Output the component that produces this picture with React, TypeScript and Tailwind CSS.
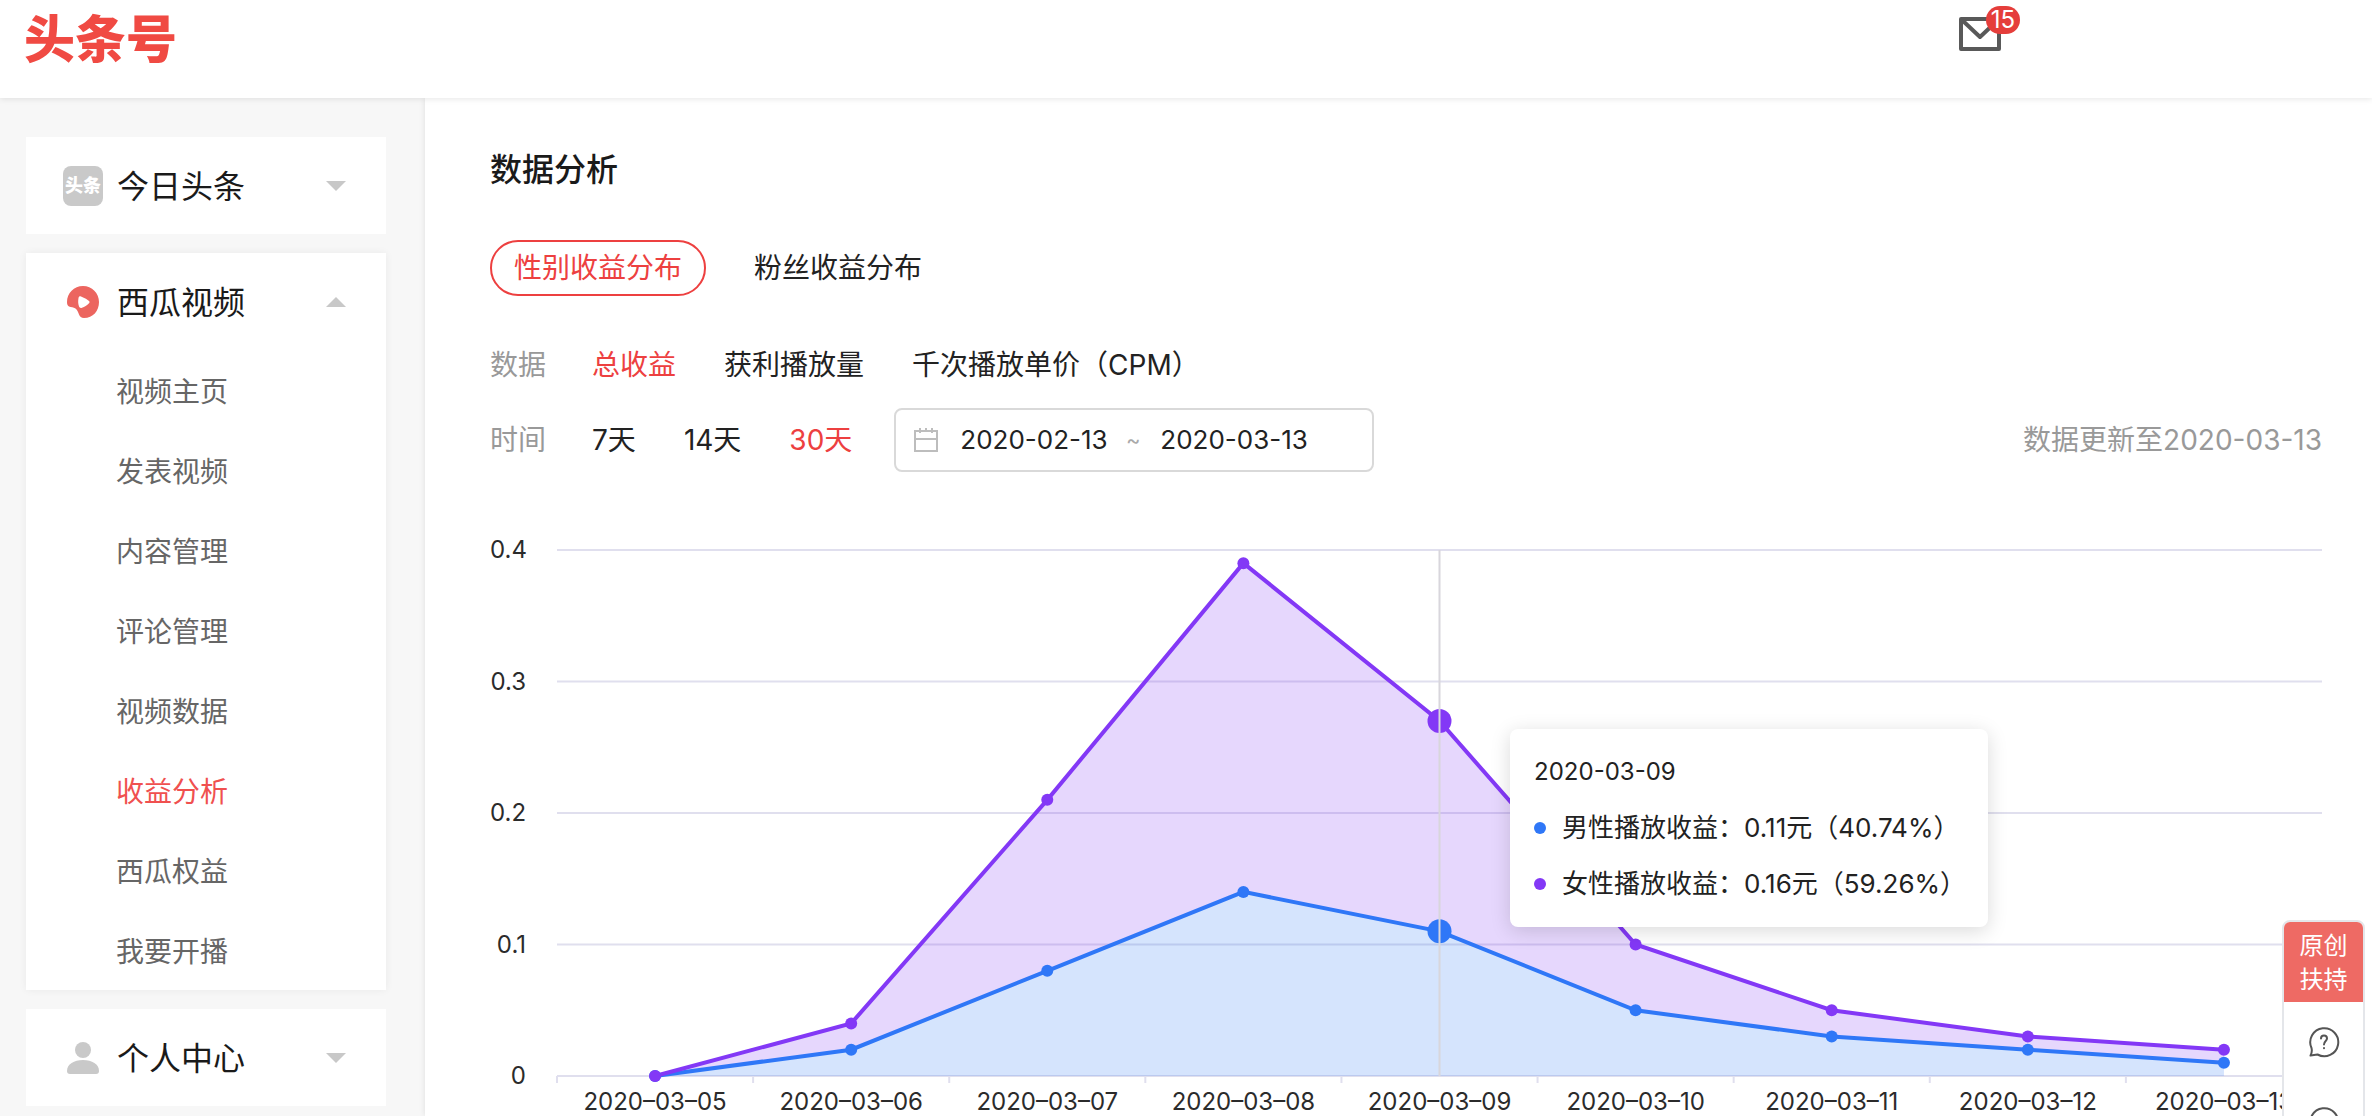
import { useState } from 'react';
import clsx from 'clsx';

const MENU = ['视频主页', '发表视频', '内容管理', '评论管理', '视频数据', '收益分析', '西瓜权益', '我要开播'];

const DATES = [
  '2020–03–05',
  '2020–03–06',
  '2020–03–07',
  '2020–03–08',
  '2020–03–09',
  '2020–03–10',
  '2020–03–11',
  '2020–03–12',
  '2020–03–13',
];
const MALE = [0, 0.02, 0.08, 0.14, 0.11, 0.05, 0.03, 0.02, 0.01];
const TOTAL = [0, 0.04, 0.21, 0.39, 0.27, 0.1, 0.05, 0.03, 0.02];
const Y_LABELS = ['0.4', '0.3', '0.2', '0.1', '0'];
const ACTIVE = 4;

const PLOT_H = 526;
const MAX = 0.4;

const xPct = (i: number) => ((i + 0.5) / DATES.length) * 100;
const yPx = (v: number) => PLOT_H - (v / MAX) * PLOT_H;
const toPoints = (values: number[]) => values.map((v, i) => `${xPct(i)},${yPx(v)}`);

function Arrow({ up = false }: { up?: boolean }) {
  return (
    <svg className="w-5 h-[10px] shrink-0" viewBox="0 0 20 10" fill="#c8c8c8">
      <path d={up ? 'M0 10L10 0L20 10Z' : 'M0 0H20L10 10Z'} />
    </svg>
  );
}

function XiguaIcon() {
  return (
    <svg className="w-8 h-8" viewBox="0 0 32 32">
      <path
        fill="#ec655f"
        d="M16 0C25 0 32 7 32 16C32 25 26 32 17 32C14 32 13 30.500 12 28.500C11 26 10.500 24 8.500 22.500C6.500 21 4 21.500 2 20.500C.5 19.500 0 18 0 16C0 7 7 0 16 0Z"
      />
      <path fill="#fff" d="M14 10.500C18 12 20.500 13.500 22 15C22.700 15.700 22.700 16.500 22 17.200C20 19.200 17.500 20.700 15 21.700C13.500 22.200 12.500 21.700 12 20.500C11 17.500 11 15 11.500 12C11.800 10.500 12.700 10 14 10.500Z" />
    </svg>
  );
}

function UserIcon() {
  return (
    <svg className="w-8 h-8" viewBox="0 0 32 32" fill="#c9c9c9">
      <circle cx="16" cy="8" r="8" />
      <path d="M0 29C0 22 7 18 16 18S32 22 32 29Q32 32 29 32H3Q0 32 0 29Z" />
    </svg>
  );
}

function CalendarIcon() {
  return (
    <svg className="w-6 h-6 shrink-0" viewBox="0 0 24 24" fill="none" stroke="#bdbdbd" strokeWidth={2}>
      <path d="M1 3H23V23H1ZM1 11H23M6 0V5M12 0V4M18 0V5" />
    </svg>
  );
}

function MailIcon() {
  return (
    <svg className="w-[42px] h-[34px]" viewBox="0 0 42 34" fill="none" stroke="#595959" strokeWidth={4} strokeLinejoin="round">
      <path d="M2 2H40V32H2ZM3 3L21 20L39 3" />
    </svg>
  );
}

function BubbleIcon({ children }: { children?: React.ReactNode }) {
  return (
    <svg className="w-8 h-8" viewBox="0 0 32 32" fill="none" stroke="#555" strokeWidth={2} strokeLinecap="round" strokeLinejoin="round">
      <path d="M3.500 22A14 14 0 1 1 9.500 28.500L2.500 29.500Q4.500 26 3.500 22Z" />
      {children}
    </svg>
  );
}

function CardHead({ icon, title, open = false }: { icon: React.ReactNode; title: string; open?: boolean }) {
  return (
    <button aria-expanded={open} className="w-full h-[97px] pl-[37px] pr-10 flex items-center text-left">
      <span className="w-10 flex justify-center mr-[14px]">{icon}</span>
      <span className="flex-1 pt-[3px] text-[32px] leading-[48px] text-[#1a1a1a]">{title}</span>
      <Arrow up={open} />
    </button>
  );
}

function Sidebar() {
  return (
    <aside className="w-[425px] shrink-0 bg-[#f7f7f7] pl-[26px] pr-[39px] pt-[39px] flex flex-col gap-[19px]">
      <section className="bg-white">
        <CardHead
          icon={
            <span className="w-10 h-10 rounded-lg bg-[#c9c9c9] text-white text-[18px] leading-[40px] font-black text-center whitespace-nowrap">
              头条
            </span>
          }
          title="今日头条"
        />
      </section>
      <section className="bg-white shadow-[0_0_8px_rgba(0,0,0,0.06)]">
        <CardHead icon={<XiguaIcon />} title="西瓜视频" open />
        <nav className="flex flex-col">
          {MENU.map((item) => (
            <a
              key={item}
              href="#"
              className={clsx('h-20 pl-[90px] text-[28px] leading-[84px]', item === '收益分析' ? 'text-[#f0504f]' : 'text-[#666]')}
            >
              {item}
            </a>
          ))}
        </nav>
      </section>
      <section className="bg-white">
        <CardHead icon={<UserIcon />} title="个人中心" />
      </section>
    </aside>
  );
}

interface OptionRowProps {
  label: string;
  options: string[];
  value: string;
  onChange: (v: string) => void;
}

function OptionRow({ label, options, value, onChange }: OptionRowProps) {
  return (
    <div className="flex items-center">
      <span className="text-[#999] mr-[46px]">{label}</span>
      <div className="flex gap-12">
        {options.map((o) => (
          <button key={o} onClick={() => onChange(o)} className={o === value ? 'text-[#ed4040]' : 'text-[#222]'}>
            {o}
          </button>
        ))}
      </div>
    </div>
  );
}

function Tooltip() {
  const rows = [
    { dot: 'bg-[#2f77f7]', text: '男性播放收益：0.11元（40.74%）' },
    { dot: 'bg-[#8338f6]', text: '女性播放收益：0.16元（59.26%）' },
  ];
  return (
    <div className="absolute left-[54%] top-[191px] w-[478px] h-[198px] px-6 py-[15px] bg-white rounded-lg shadow-[0_4px_20px_rgba(0,0,0,0.15)] text-[26px] leading-[56px] text-[#222] whitespace-nowrap">
      <p className="text-[24px] leading-[56px]">2020-03-09</p>
      {rows.map((r) => (
        <p key={r.text} className="flex items-center">
          <i className={clsx('w-3 h-3 shrink-0 rounded-full mr-4', r.dot)} />
          <span>{r.text}</span>
        </p>
      ))}
    </div>
  );
}

function Dots({ values, color }: { values: number[]; color: string }) {
  return (
    <>
      {values.map((v, i) => (
        <circle key={i} cx={`${xPct(i)}%`} cy={yPx(v)} r={i === ACTIVE ? 12 : 6} fill={color} />
      ))}
    </>
  );
}

function Chart() {
  const male = toPoints(MALE);
  const total = toPoints(TOTAL);
  const base = [`${xPct(DATES.length - 1)},${PLOT_H}`, `${xPct(0)},${PLOT_H}`];

  return (
    <div className="flex mt-[66px] text-[#2b2b2b]">
      <div className="w-9 mr-[31px] h-[550px] flex flex-col justify-between text-2xl leading-6 text-right">
        {Y_LABELS.map((l) => (
          <span key={l}>{l}</span>
        ))}
      </div>
      <div className="flex-1 relative pt-3">
        <svg className="block w-full h-[526px] overflow-visible">
          {Y_LABELS.map((l, i) => (
            <line key={l} x1="0" x2="100%" y1={(i * PLOT_H) / 4} y2={(i * PLOT_H) / 4} stroke="#e0dfee" strokeWidth={2} />
          ))}
          {DATES.map((d, i) => (
            <line
              key={d}
              x1={`${(i / DATES.length) * 100}%`}
              x2={`${(i / DATES.length) * 100}%`}
              y1={PLOT_H}
              y2={PLOT_H + 7}
              stroke="#e0dfee"
              strokeWidth={2}
            />
          ))}
          <svg width="100%" height={PLOT_H} viewBox={`0 0 100 ${PLOT_H}`} preserveAspectRatio="none" className="overflow-visible">
            <polygon points={[...male, ...base].join(' ')} fill="#2f77f7" fillOpacity={0.2} />
            <polygon points={[...total, ...[...male].reverse()].join(' ')} fill="#8338f6" fillOpacity={0.2} />
            <polyline points={male.join(' ')} fill="none" stroke="#2f77f7" strokeWidth={4} vectorEffect="non-scaling-stroke" />
            <polyline points={total.join(' ')} fill="none" stroke="#8338f6" strokeWidth={4} vectorEffect="non-scaling-stroke" />
          </svg>
          <Dots values={MALE} color="#2f77f7" />
          <Dots values={TOTAL} color="#8338f6" />
          <line x1={`${xPct(ACTIVE)}%`} x2={`${xPct(ACTIVE)}%`} y1="0" y2={PLOT_H} stroke="#d8d6dc" strokeWidth={2} />
        </svg>
        <div className="grid grid-cols-9 mt-3 text-2xl leading-[27px] text-center whitespace-nowrap">
          {DATES.map((d) => (
            <span key={d}>{d}</span>
          ))}
        </div>
        <Tooltip />
      </div>
    </div>
  );
}

function FloatBar() {
  return (
    <div className="fixed right-[7px] top-[920px] w-[83px] border-2 border-[#e4e6ea] rounded-lg bg-white overflow-hidden">
      <a href="#" className="flex flex-col items-center justify-center h-20 pt-0.5 bg-[#ee6a64] text-white text-2xl leading-[34px]">
        <span>原创</span>
        <span>扶持</span>
      </a>
      <button aria-label="帮助" className="w-full h-20 flex items-center justify-center">
        <BubbleIcon>
          <path d="M13 12.500C13 8.500 19 8.500 19 12.500C19 15 16 15 16 18.500M16 22V22.200" />
        </BubbleIcon>
      </button>
      <button aria-label="反馈" className="w-full h-20 flex items-center justify-center">
        <BubbleIcon />
      </button>
    </div>
  );
}

function App() {
  const [tab, setTab] = useState('性别收益分布');
  const [metric, setMetric] = useState('总收益');
  const [range, setRange] = useState('30天');

  return (
    <div className="h-screen flex flex-col overflow-hidden bg-white font-['Inter','Noto_Sans_CJK_SC',sans-serif]">
      <header className="relative z-10 h-[98px] shrink-0 pl-6 pr-[371px] flex items-start justify-between bg-white shadow-[0_1px_6px_rgba(0,0,0,0.1)]">
        <a href="#" className="mt-[5px] text-[51px] leading-[70px] font-black text-[#f04a43]">
          头条号
        </a>
        <button aria-label="消息" className="relative mt-[17px]">
          <MailIcon />
          <span className="absolute -top-[11px] left-[27px] w-[34px] h-7 rounded-full bg-[#e53e3b] text-white text-2xl leading-7 text-center">
            15
          </span>
        </button>
      </header>

      <div className="flex-1 flex min-h-0">
        <Sidebar />

        <main className="flex-1 min-w-0 bg-white pl-[65px] pr-[50px] pt-12 text-[28px] leading-[42px] shadow-[0_0_6px_rgba(0,0,0,0.1)]">
          <h1 className="text-[32px] leading-[48px] font-medium text-[#1a1a1a]">数据分析</h1>

          <div className="mt-[46px] flex gap-6">
            {['性别收益分布', '粉丝收益分布'].map((t) => (
              <button
                key={t}
                onClick={() => setTab(t)}
                className={clsx(
                  'h-14 px-[22px] rounded-full border-2',
                  t === tab ? 'border-[#ed4040] text-[#ed4040]' : 'border-transparent text-[#222]'
                )}
              >
                {t}
              </button>
            ))}
          </div>

          <div className="mt-12">
            <OptionRow label="数据" options={['总收益', '获利播放量', '千次播放单价（CPM）']} value={metric} onChange={setMetric} />
          </div>

          <div className="mt-[22px] flex items-center">
            <OptionRow label="时间" options={['7天', '14天', '30天']} value={range} onChange={setRange} />
            <div className="ml-[42px] w-[480px] h-16 pl-[18px] border-2 border-[#d9d9d9] rounded-lg flex items-center text-[26px] text-[#222]">
              <CalendarIcon />
              <input aria-label="开始日期" defaultValue="2020-02-13" className="ml-[22px] w-[158px] outline-none" />
              <span className="w-[42px] pr-3 text-center text-[22px] text-[#aaa]">~</span>
              <input aria-label="结束日期" defaultValue="2020-03-13" className="w-[158px] outline-none" />
            </div>
            <span className="ml-auto text-[#999]">数据更新至2020-03-13</span>
          </div>

          <Chart />
        </main>
      </div>

      <FloatBar />
    </div>
  );
}

export default App;
